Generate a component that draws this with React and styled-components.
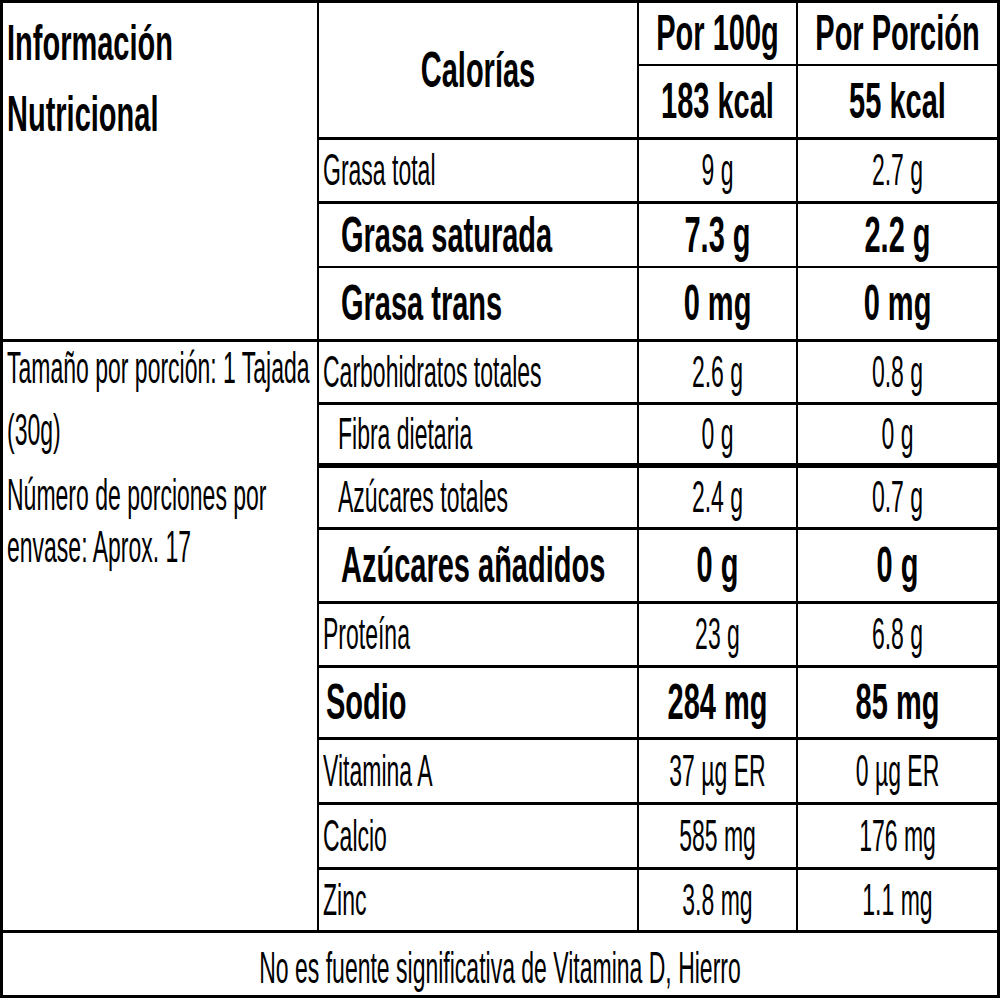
import React from 'react'
import styled, { createGlobalStyle } from 'styled-components'

const GlobalStyle = createGlobalStyle`
  html, body {
    margin: 0;
    padding: 0;
    background: #fff;
  }
  body {
    font-family: "Liberation Sans", Arial, sans-serif;
    color: #000;
  }
`

// heights of the 15 table rows, bottom rule included
const ROWS = [63, 74, 64, 64, 74, 63, 63, 62, 74, 64, 72, 65, 65, 63, 65]

const Table = styled.div`
  display: grid;
  grid-template-columns: 316px 320px 159px 202px;
  grid-template-rows: ${ROWS.map(h => `${h}px`).join(' ')};
  width: 1000px;
  border-top: 3px solid #000;
  border-left: 3px solid #000;
`

const Cell = styled.div`
  box-sizing: border-box;
  display: flex;
  align-items: center;
  justify-content: ${p => (p.$center ? 'center' : 'flex-start')};
  padding-left: ${p => p.$indent || 0}px;
  border-right: ${p => (p.$last ? 3 : 2)}px solid #000;
  border-bottom: ${p => p.$line || 3}px solid #000;
  grid-row: ${p => (p.$rows ? `span ${p.$rows}` : 'auto')};
  grid-column: ${p => (p.$cols ? `span ${p.$cols}` : 'auto')};
  overflow: visible;
`

const Stack = styled(Cell)`
  flex-direction: column;
  align-items: stretch;
  justify-content: flex-start;
  padding-top: ${p => p.$top || 0}px;
  gap: ${p => p.$gap || 0}px;
`

const Para = styled.div`
  display: flex;
  flex-direction: column;
  gap: ${p => p.$gap || 0}px;
`

const Line = styled.div`
  display: flex;
  align-items: center;
  height: ${p => p.$h}px;
`

const Footer = styled(Cell)`
  padding-top: 8px;
`

// the label face is a tall, narrow sans: plain Arial metrics pulled up vertically
const Txt = styled.span`
  display: inline-block;
  white-space: nowrap;
  line-height: 1;
  font-size: ${p => (p.$bold ? 29 : 23)}px;
  font-weight: ${p => (p.$bold ? 700 : 400)};
  transform: scaleY(${p => (p.$bold ? 1.72 : 1.94)});
`

const nutrients = [
  { label: 'Grasa total', a: '9 g', b: '2.7 g', indent: 4 },
  { label: 'Grasa saturada', a: '7.3 g', b: '2.2 g', bold: true, indent: 22, line: 2 },
  { label: 'Grasa trans', a: '0 mg', b: '0 mg', bold: true, indent: 22 },
  { label: 'Carbohidratos totales', a: '2.6 g', b: '0.8 g', indent: 4 },
  { label: 'Fibra dietaria', a: '0 g', b: '0 g', indent: 19, line: 5 },
  { label: 'Azúcares totales', a: '2.4 g', b: '0.7 g', indent: 19 },
  { label: 'Azúcares añadidos', a: '0 g', b: '0 g', bold: true, indent: 22 },
  { label: 'Proteína', a: '23 g', b: '6.8 g', indent: 4 },
  { label: 'Sodio', a: '284 mg', b: '85 mg', bold: true, indent: 7 },
  { label: 'Vitamina A', a: '37 µg ER', b: '0 µg ER', indent: 4 },
  { label: 'Calcio', a: '585 mg', b: '176 mg', indent: 4 },
  { label: 'Zinc', a: '3.8 mg', b: '1.1 mg', indent: 4 },
]

const NutrientRow = ({ item }) => (
  <>
    <Cell $indent={item.indent} $line={item.line}>
      <Txt $bold={item.bold}>{item.label}</Txt>
    </Cell>
    <Cell $center $line={item.line}>
      <Txt $bold={item.bold}>{item.a}</Txt>
    </Cell>
    <Cell $center $last $line={item.line}>
      <Txt $bold={item.bold}>{item.b}</Txt>
    </Cell>
  </>
)

const App = () => (
  <>
    <GlobalStyle />
    <Table>
      <Stack $rows={5} $top={10} $gap={11} $indent={4}>
        <Line $h={60}><Txt $bold>Información</Txt></Line>
        <Line $h={60}><Txt $bold>Nutricional</Txt></Line>
      </Stack>
      <Cell $rows={2} $center>
        <Txt $bold>Calorías</Txt>
      </Cell>
      <Cell $center $line={2}><Txt $bold>Por 100g</Txt></Cell>
      <Cell $center $last $line={2}><Txt $bold>Por Porción</Txt></Cell>
      <Cell $center><Txt $bold>183 kcal</Txt></Cell>
      <Cell $center $last><Txt $bold>55 kcal</Txt></Cell>

      {nutrients.slice(0, 3).map(n => <NutrientRow key={n.label} item={n} />)}

      <Stack $rows={9} $gap={13} $indent={4}>
        <Para $gap={10}>
          <Line $h={52}><Txt>Tamaño por porción: 1 Tajada</Txt></Line>
          <Line $h={52}><Txt>(30g)</Txt></Line>
        </Para>
        <Para>
          <Line $h={52}><Txt>Número de porciones por</Txt></Line>
          <Line $h={52}><Txt>envase: Aprox. 17</Txt></Line>
        </Para>
      </Stack>

      {nutrients.slice(3).map(n => <NutrientRow key={n.label} item={n} />)}

      <Footer $cols={4} $center $last>
        <Txt>No es fuente significativa de Vitamina D, Hierro</Txt>
      </Footer>
    </Table>
  </>
)

export default App
